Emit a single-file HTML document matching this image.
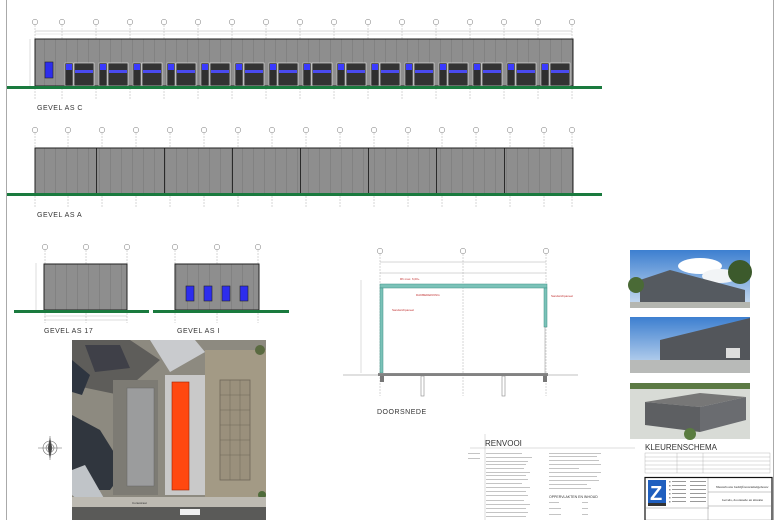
<!DOCTYPE html>
<html><head><meta charset="utf-8"><style>
html,body{margin:0;padding:0;background:#fff;width:780px;height:520px;overflow:hidden;font-family:"Liberation Sans",sans-serif}
svg{display:block}
.lbl{font-family:"Liberation Sans",sans-serif;font-size:7px;fill:#333;letter-spacing:0.5px}
</style></head><body>
<svg width="780" height="520" viewBox="0 0 780 520" xmlns="http://www.w3.org/2000/svg">
<defs>
<pattern id="pan" x="0" y="0" width="11" height="10" patternUnits="userSpaceOnUse">
<rect width="11" height="10" fill="#8e8e8e"/><rect x="0" width="0.5" height="10" fill="#777"/>
</pattern>
<g id="bay">
<rect x="3" y="63" width="8" height="23" fill="#2f2f2f" stroke="#ddd" stroke-width="0.5"/>
<rect x="4" y="64" width="6" height="6" fill="#3a3aff"/>
<rect x="12" y="63" width="20" height="23" fill="#333" stroke="#eee" stroke-width="0.6"/>
<rect x="13" y="70" width="18" height="3" fill="#4a4af0"/>
</g>
<g id="bub"><circle r="2.8" fill="#fff" stroke="#777" stroke-width="0.5"/></g>
<linearGradient id="sky" x1="0" y1="0" x2="0" y2="1"><stop offset="0" stop-color="#3d7fd0"/><stop offset="1" stop-color="#cfe0f2"/></linearGradient>
</defs>
<line x1="6.5" y1="0" x2="6.5" y2="520" stroke="#aaa" stroke-width="1"/>
<line x1="773.5" y1="0" x2="773.5" y2="520" stroke="#aaa" stroke-width="1"/>

<!-- GEVEL AS C -->
<g stroke="#999" stroke-width="0.4" stroke-dasharray="2,1">
<line x1="35" y1="22" x2="35" y2="100"/><line x1="62" y1="22" x2="62" y2="100"/><line x1="96" y1="22" x2="96" y2="100"/><line x1="130" y1="22" x2="130" y2="100"/><line x1="164" y1="22" x2="164" y2="100"/><line x1="198" y1="22" x2="198" y2="100"/><line x1="232" y1="22" x2="232" y2="100"/><line x1="266" y1="22" x2="266" y2="100"/><line x1="300" y1="22" x2="300" y2="100"/><line x1="334" y1="22" x2="334" y2="100"/><line x1="368" y1="22" x2="368" y2="100"/><line x1="402" y1="22" x2="402" y2="100"/><line x1="436" y1="22" x2="436" y2="100"/><line x1="470" y1="22" x2="470" y2="100"/><line x1="504" y1="22" x2="504" y2="100"/><line x1="538" y1="22" x2="538" y2="100"/><line x1="572" y1="22" x2="572" y2="100"/>
</g>
<line x1="35" y1="31" x2="572" y2="31" stroke="#999" stroke-width="0.4"/>
<line x1="35" y1="34" x2="572" y2="34" stroke="#bbb" stroke-width="0.3"/>
<g>
<use href="#bub" x="35" y="22"/><use href="#bub" x="62" y="22"/><use href="#bub" x="96" y="22"/><use href="#bub" x="130" y="22"/><use href="#bub" x="164" y="22"/><use href="#bub" x="198" y="22"/><use href="#bub" x="232" y="22"/><use href="#bub" x="266" y="22"/><use href="#bub" x="300" y="22"/><use href="#bub" x="334" y="22"/><use href="#bub" x="368" y="22"/><use href="#bub" x="402" y="22"/><use href="#bub" x="436" y="22"/><use href="#bub" x="470" y="22"/><use href="#bub" x="504" y="22"/><use href="#bub" x="538" y="22"/><use href="#bub" x="572" y="22"/>
</g>
<rect x="35" y="39" width="538" height="47" fill="url(#pan)" stroke="#222" stroke-width="1"/>
<rect x="45" y="62" width="8" height="16" fill="#2d2dee" stroke="#222" stroke-width="0.6"/>
<use href="#bay" x="62"/><use href="#bay" x="96"/><use href="#bay" x="130"/><use href="#bay" x="164"/><use href="#bay" x="198"/><use href="#bay" x="232"/><use href="#bay" x="266"/><use href="#bay" x="300"/><use href="#bay" x="334"/><use href="#bay" x="368"/><use href="#bay" x="402"/><use href="#bay" x="436"/><use href="#bay" x="470"/><use href="#bay" x="504"/><use href="#bay" x="538"/>
<rect x="7" y="86" width="595" height="3" fill="#1a7a3e"/>
<line x1="30" y1="39" x2="30" y2="86" stroke="#aaa" stroke-width="0.4"/>
<text x="37" y="110" class="lbl">GEVEL AS C</text>

<!-- GEVEL AS A -->
<g stroke="#999" stroke-width="0.4" stroke-dasharray="2,1">
<line x1="35" y1="130" x2="35" y2="208"/><line x1="68" y1="130" x2="68" y2="208"/><line x1="102" y1="130" x2="102" y2="208"/><line x1="136" y1="130" x2="136" y2="208"/><line x1="170" y1="130" x2="170" y2="208"/><line x1="204" y1="130" x2="204" y2="208"/><line x1="238" y1="130" x2="238" y2="208"/><line x1="272" y1="130" x2="272" y2="208"/><line x1="306" y1="130" x2="306" y2="208"/><line x1="340" y1="130" x2="340" y2="208"/><line x1="374" y1="130" x2="374" y2="208"/><line x1="408" y1="130" x2="408" y2="208"/><line x1="442" y1="130" x2="442" y2="208"/><line x1="476" y1="130" x2="476" y2="208"/><line x1="510" y1="130" x2="510" y2="208"/><line x1="544" y1="130" x2="544" y2="208"/><line x1="572" y1="130" x2="572" y2="208"/>
</g>
<g>
<use href="#bub" x="35" y="130"/><use href="#bub" x="68" y="130"/><use href="#bub" x="102" y="130"/><use href="#bub" x="136" y="130"/><use href="#bub" x="170" y="130"/><use href="#bub" x="204" y="130"/><use href="#bub" x="238" y="130"/><use href="#bub" x="272" y="130"/><use href="#bub" x="306" y="130"/><use href="#bub" x="340" y="130"/><use href="#bub" x="374" y="130"/><use href="#bub" x="408" y="130"/><use href="#bub" x="442" y="130"/><use href="#bub" x="476" y="130"/><use href="#bub" x="510" y="130"/><use href="#bub" x="544" y="130"/><use href="#bub" x="572" y="130"/>
</g>
<rect x="35" y="148" width="538" height="46" fill="url(#pan)" stroke="#222" stroke-width="1"/>
<g stroke="#111" stroke-width="0.8">
<line x1="96.5" y1="148" x2="96.5" y2="194"/><line x1="164.5" y1="148" x2="164.5" y2="194"/><line x1="232.5" y1="148" x2="232.5" y2="194"/><line x1="300.5" y1="148" x2="300.5" y2="194"/><line x1="368.5" y1="148" x2="368.5" y2="194"/><line x1="436.5" y1="148" x2="436.5" y2="194"/><line x1="504.5" y1="148" x2="504.5" y2="194"/>
</g>
<rect x="7" y="193" width="595" height="3" fill="#1a7a3e"/>
<text x="37" y="217" class="lbl">GEVEL AS A</text>

<!-- GEVEL AS 17 / I -->
<g stroke="#999" stroke-width="0.4" stroke-dasharray="2,1">
<line x1="45" y1="247" x2="45" y2="323"/><line x1="86" y1="247" x2="86" y2="323"/><line x1="127" y1="247" x2="127" y2="323"/>
<line x1="175" y1="247" x2="175" y2="323"/><line x1="217" y1="247" x2="217" y2="323"/><line x1="258" y1="247" x2="258" y2="323"/>
</g>
<use href="#bub" x="45" y="247"/><use href="#bub" x="86" y="247"/><use href="#bub" x="127" y="247"/>
<use href="#bub" x="175" y="247"/><use href="#bub" x="217" y="247"/><use href="#bub" x="258" y="247"/>
<rect x="44" y="264" width="83" height="46" fill="url(#pan)" stroke="#222" stroke-width="1"/>
<rect x="14" y="310" width="135" height="3" fill="#1a7a3e"/>
<line x1="36" y1="263" x2="36" y2="310" stroke="#aaa" stroke-width="0.4"/>
<line x1="44" y1="316" x2="127" y2="316" stroke="#aaa" stroke-width="0.4"/>
<line x1="44" y1="320" x2="127" y2="320" stroke="#aaa" stroke-width="0.4"/>
<text x="44" y="333" class="lbl">GEVEL AS 17</text>
<rect x="175" y="264" width="84" height="46" fill="url(#pan)" stroke="#222" stroke-width="1"/>
<rect x="186" y="286" width="8" height="15" fill="#2d2dee" stroke="#222" stroke-width="0.6"/>
<rect x="204" y="286" width="8" height="15" fill="#2d2dee" stroke="#222" stroke-width="0.6"/>
<rect x="222" y="286" width="8" height="15" fill="#2d2dee" stroke="#222" stroke-width="0.6"/>
<rect x="240" y="286" width="8" height="15" fill="#2d2dee" stroke="#222" stroke-width="0.6"/>
<rect x="153" y="310" width="136" height="3" fill="#1a7a3e"/>
<text x="177" y="333" class="lbl">GEVEL AS I</text>

<!-- Aerial -->
<g>
<rect x="72" y="340" width="194" height="180" fill="#8d8a80"/>
<polygon points="72,340 130,340 160,360 120,395 72,385" fill="#5e5d5a"/>
<polygon points="85,345 120,345 130,368 95,372" fill="#3f4048"/>
<polygon points="150,340 195,340 205,352 170,372" fill="#c9cbce"/>
<polygon points="72,360 90,375 82,395 72,392" fill="#2e3540"/>
<polygon points="72,415 72,490 110,490 125,470 100,430" fill="#30363e"/>
<polygon points="72,470 85,465 105,500 90,510 72,495" fill="#c0c4c8"/>
<rect x="113" y="380" width="45" height="115" fill="#7d7b74"/>
<rect x="127" y="388" width="27" height="98" fill="#9b9c9d" stroke="#666" stroke-width="0.5"/>
<rect x="165" y="375" width="40" height="120" fill="#c9c9c9"/>
<rect x="172" y="382" width="17" height="108" fill="#ff4810" stroke="#a02000" stroke-width="0.6"/>
<rect x="205" y="350" width="61" height="150" fill="#a39a85"/>
<rect x="220" y="380" width="30" height="100" fill="#9a907c" stroke="#6e6658" stroke-width="0.8"/>
<g stroke="#6e6658" stroke-width="0.5"><line x1="220" y1="395" x2="250" y2="395"/><line x1="220" y1="410" x2="250" y2="410"/><line x1="220" y1="425" x2="250" y2="425"/><line x1="220" y1="440" x2="250" y2="440"/><line x1="220" y1="455" x2="250" y2="455"/><line x1="230" y1="380" x2="230" y2="480"/><line x1="240" y1="380" x2="240" y2="480"/></g>
<circle cx="260" cy="350" r="5" fill="#5a6a40"/><circle cx="262" cy="495" r="4" fill="#4f6b3a"/>
<rect x="72" y="497" width="194" height="10" fill="#bdbab2"/>
<rect x="72" y="507" width="194" height="13" fill="#5a5a58"/>
<rect x="180" y="509" width="20" height="6" fill="#eee"/>
<text x="132" y="504" font-size="3" fill="#333">Curiestraat</text>
</g>
<g transform="translate(50,448)" stroke="#666" fill="none" stroke-width="0.6">
<circle r="7"/><circle r="4"/><line x1="-12" y1="0" x2="12" y2="0"/><line x1="0" y1="-12" x2="0" y2="12"/>
<polygon points="0,-10 2,0 0,10 -2,0" fill="#444"/>
</g>

<!-- Section -->
<g stroke="#999" stroke-width="0.4" stroke-dasharray="2,1">
<line x1="380" y1="251" x2="380" y2="396"/><line x1="463" y1="251" x2="463" y2="396"/><line x1="546" y1="251" x2="546" y2="396"/>
</g>
<use href="#bub" x="380" y="251"/><use href="#bub" x="463" y="251"/><use href="#bub" x="546" y="251"/>
<line x1="380" y1="262" x2="546" y2="262" stroke="#999" stroke-width="0.4"/>
<line x1="380" y1="273" x2="546" y2="273" stroke="#999" stroke-width="0.4"/>
<rect x="380" y="284" width="167" height="4" fill="#7bc2b8" stroke="#3d8f85" stroke-width="0.5"/>
<rect x="380" y="288" width="3" height="85" fill="#7bc2b8" stroke="#3d8f85" stroke-width="0.5"/>
<rect x="544" y="288" width="3" height="39" fill="#7bc2b8" stroke="#3d8f85" stroke-width="0.5"/>
<line x1="545" y1="327" x2="545" y2="373" stroke="#888" stroke-width="0.5"/>
<rect x="378" y="373" width="170" height="3" fill="#8a8a8a"/>
<line x1="343" y1="375" x2="578" y2="375" stroke="#666" stroke-width="0.4"/>
<rect x="380" y="376" width="4" height="6" fill="#777"/><rect x="543" y="376" width="4" height="6" fill="#777"/>
<g stroke="#888" stroke-width="0.6" fill="none"><rect x="421" y="376" width="3" height="20"/><rect x="502" y="376" width="3" height="20"/></g>
<text x="400" y="280" font-size="3" fill="#c03030">Rh max. 6,00+</text>
<text x="416" y="296" font-size="3" fill="#c03030">DAKBEDEKKING</text>
<text x="392" y="311" font-size="3" fill="#c03030">Sandwichpaneel</text>
<text x="551" y="297" font-size="3" fill="#c03030">Sandwichpaneel</text>
<line x1="361" y1="280" x2="361" y2="373" stroke="#aaa" stroke-width="0.4"/>
<text x="377" y="414" class="lbl">DOORSNEDE</text>

<!-- Photos -->
<g>
<rect x="630" y="250" width="120" height="58" fill="url(#sky)"/>
<ellipse cx="700" cy="266" rx="22" ry="8" fill="#fff"/><ellipse cx="720" cy="276" rx="18" ry="7" fill="#f2f4f6"/>
<polygon points="640,280 670,270 745,290 745,303 640,305" fill="#555a60"/>
<rect x="630" y="302" width="120" height="6" fill="#b4b6b0"/>
<circle cx="740" cy="272" r="12" fill="#3c5a2c"/><circle cx="636" cy="285" r="8" fill="#4a6a36"/>
<rect x="630" y="317" width="120" height="56" fill="url(#sky)"/>
<polygon points="660,340 750,318 750,362 660,360" fill="#53565b"/>
<rect x="630" y="360" width="120" height="13" fill="#b8bab8"/>
<rect x="726" y="348" width="14" height="10" fill="#ddd"/>
<rect x="630" y="383" width="120" height="56" fill="#d8dbd6"/>
<rect x="630" y="383" width="120" height="6" fill="#5c7a44"/>
<polygon points="645,402 700,393 746,397 700,407" fill="#777"/>
<polygon points="645,402 700,407 700,432 645,425" fill="#5d5f62"/>
<polygon points="700,407 746,397 746,420 700,432" fill="#6a6c70"/>
<circle cx="690" cy="434" r="6" fill="#5a7c40"/>
</g>

<!-- Renvooi -->
<line x1="485" y1="434" x2="485" y2="520" stroke="#bbb" stroke-width="0.5"/>
<text x="485" y="446" font-size="8" fill="#333">RENVOOI</text>
<line x1="470" y1="448" x2="635" y2="448" stroke="#bbb" stroke-width="0.5"/>
<g fill="#c4c4c4">
<rect x="468" y="453" width="12" height="1"/><rect x="468" y="458" width="12" height="1"/>
<rect x="486" y="453" width="36" height="1"/><rect x="486" y="457" width="46" height="1"/><rect x="486" y="461" width="42" height="1"/><rect x="486" y="464" width="40" height="1"/><rect x="486" y="468" width="38" height="1"/><rect x="486" y="472" width="44" height="1"/><rect x="486" y="475" width="40" height="1"/><rect x="486" y="479" width="42" height="1"/><rect x="486" y="483" width="36" height="1"/><rect x="486" y="487" width="44" height="1"/><rect x="486" y="491" width="40" height="1"/><rect x="486" y="495" width="42" height="1"/><rect x="486" y="500" width="38" height="1"/><rect x="486" y="504" width="44" height="1"/><rect x="486" y="508" width="40" height="1"/><rect x="486" y="512" width="42" height="1"/><rect x="486" y="516" width="40" height="1"/>
<rect x="549" y="453" width="52" height="1"/><rect x="549" y="456" width="48" height="1"/><rect x="549" y="460" width="50" height="1"/><rect x="549" y="464" width="52" height="1"/><rect x="549" y="468" width="30" height="1"/><rect x="549" y="472" width="52" height="1"/><rect x="549" y="476" width="48" height="1"/><rect x="549" y="480" width="50" height="1"/><rect x="549" y="484" width="38" height="1"/><rect x="549" y="488" width="42" height="1"/>
<rect x="549" y="502" width="10" height="1"/><rect x="549" y="508" width="12" height="1"/><rect x="549" y="514" width="12" height="1"/>
<rect x="582" y="502" width="6" height="1"/><rect x="582" y="508" width="6" height="1"/><rect x="582" y="514" width="6" height="1"/>
</g>
<text x="549" y="498" font-size="3.5" fill="#333">OPPERVLAKTEN EN INHOUD</text>

<!-- Kleurenschema -->
<text x="645" y="450" font-size="8" fill="#333">KLEURENSCHEMA</text>
<g stroke="#aaa" stroke-width="0.4" fill="none">
<rect x="645" y="453" width="125" height="20"/>
<line x1="677" y1="453" x2="677" y2="473"/><line x1="703" y1="453" x2="703" y2="473"/>
<line x1="645" y1="457" x2="770" y2="457"/><line x1="645" y1="461" x2="770" y2="461"/><line x1="645" y1="465" x2="770" y2="465"/><line x1="645" y1="469" x2="770" y2="469"/>
</g>
<!-- Title block -->
<rect x="645" y="477.5" width="127" height="43" fill="#fff" stroke="#111" stroke-width="1.2"/>
<rect x="648" y="480" width="18" height="26" fill="#1f5fbf"/>
<text x="650" y="500" font-size="20" font-weight="bold" fill="#fff">Z</text>
<rect x="648" y="503" width="18" height="3" fill="#333"/>
<line x1="645" y1="508" x2="709" y2="508" stroke="#777" stroke-width="0.4"/>
<line x1="708" y1="478" x2="708" y2="520" stroke="#777" stroke-width="0.4"/>
<line x1="708" y1="492" x2="772" y2="492" stroke="#777" stroke-width="0.4"/>
<line x1="708" y1="506" x2="772" y2="506" stroke="#777" stroke-width="0.4"/>
<text x="716" y="488" font-size="3.5" font-family="Liberation Serif" fill="#222">Nieuwbouw bedrijfsverzamelgebouw</text>
<text x="722" y="501" font-size="3.5" font-family="Liberation Serif" fill="#222">Gevels, doorsnede en situatie</text>
<g fill="#999"><rect x="669" y="481" width="1.5" height="1.5"/><rect x="669" y="485" width="1.5" height="1.5"/><rect x="669" y="489" width="1.5" height="1.5"/><rect x="669" y="493" width="1.5" height="1.5"/><rect x="669" y="497" width="1.5" height="1.5"/><rect x="669" y="501" width="1.5" height="1.5"/>
<rect x="672" y="481" width="14" height="1"/><rect x="672" y="485" width="14" height="1"/><rect x="672" y="489" width="14" height="1"/><rect x="672" y="493" width="14" height="1"/><rect x="672" y="497" width="14" height="1"/><rect x="672" y="501" width="14" height="1"/>
<rect x="690" y="481" width="16" height="1"/><rect x="690" y="485" width="16" height="1"/><rect x="690" y="489" width="16" height="1"/><rect x="690" y="493" width="16" height="1"/><rect x="690" y="497" width="16" height="1"/><rect x="690" y="501" width="16" height="1"/></g>
</svg>
</body></html>
